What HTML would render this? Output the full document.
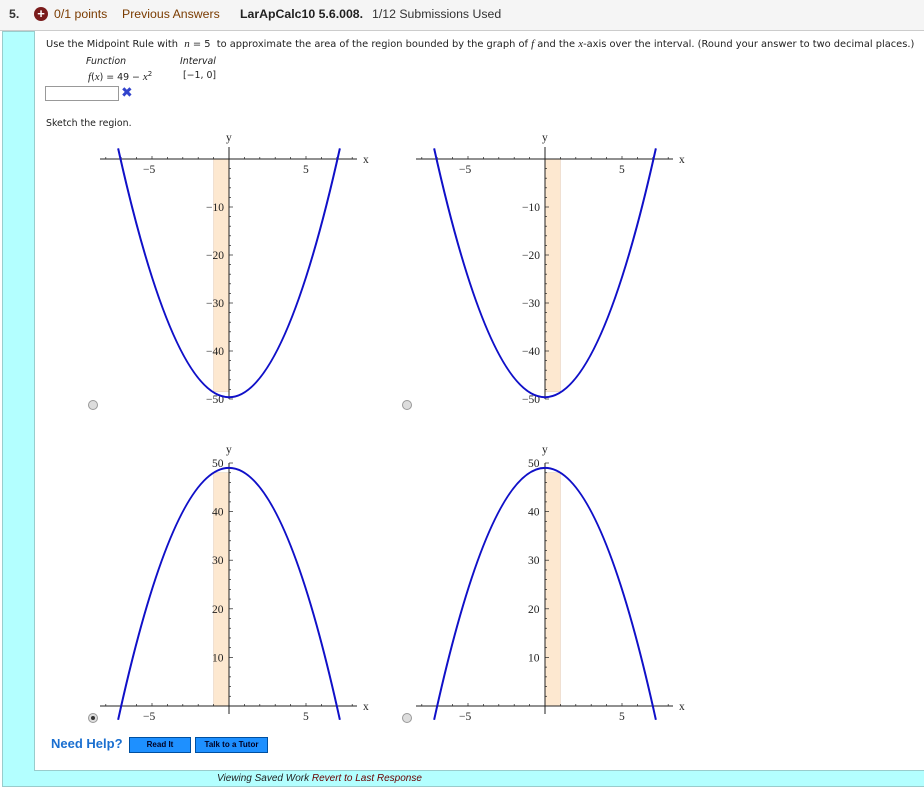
<!DOCTYPE html>
<html><head><meta charset="utf-8"><style>
body{margin:0;width:924px;height:793px;background:#fff;font-family:"DejaVu Sans",sans-serif;position:relative;overflow:hidden}
.hdr{position:absolute;left:0;top:0;width:924px;height:30px;background:#f5f5f5;border-bottom:1px solid #ccc}
.hdr span{position:absolute;top:7px;font-size:12.3px;color:#333;font-family:"Liberation Sans",sans-serif}
.panel{position:absolute;left:2px;top:31px;width:922px;height:756px;background:#b3ffff;border:1px solid #9cc;border-right:none;box-sizing:border-box}
.inner{position:absolute;left:34px;top:31px;width:890px;height:740px;background:#fff;border-left:1px solid #9cc;border-bottom:1px solid #9cc;box-sizing:border-box}
.t{position:absolute;font-size:9.4px;color:#222;white-space:nowrap}
i{font-family:"Liberation Serif",serif;font-size:11px}
svg{position:absolute;left:0;top:0}
.btn{position:absolute;top:737px;height:14px;background:#1e90ff;border:1px solid #0050a0;font:bold 8px "Liberation Sans",sans-serif;color:#002;text-align:center;line-height:14px}
</style></head><body>
<div class="hdr">
<span style="left:9px;font-weight:bold">5.</span>
<span style="left:34px;top:7px;width:14px;height:14px;border-radius:50%;background:#7a1c1c;color:#fff;font-weight:bold;text-align:center;line-height:14px;font-size:13px">+</span>
<span style="left:54px;color:#7a3b00">0/1 points</span>
<span style="left:122px;color:#7a3b00">Previous Answers</span>
<span style="left:240px;font-weight:bold;color:#222">LarApCalc10 5.6.008.</span>
<span style="left:372px;color:#333">1/12 Submissions Used</span>
</div>
<div class="panel"></div>
<div class="inner"></div>
<div class="t" style="left:46px;top:38px;font-size:9.85px">Use the Midpoint Rule with &nbsp;<i>n</i> = 5 &nbsp;to approximate the area of the region bounded by the graph of <i>f</i> and the <i>x</i>-axis over the interval. (Round your answer to two decimal places.)</div>
<div class="t" style="left:86px;top:56px;font-style:italic">Function</div>
<div class="t" style="left:180px;top:56px;font-style:italic">Interval</div>
<div class="t" style="left:88px;top:70px"><i>f</i>(<i>x</i>) = 49 − <i>x</i><sup style="font-size:7px">2</sup></div>
<div class="t" style="left:183px;top:70px">[−1, 0]</div>
<div style="position:absolute;left:45px;top:86px;width:72px;height:13px;border:1px solid #999"></div>
<div class="t" style="left:121px;top:85px;color:#3344cc;font-size:14px;font-weight:bold">✖</div>
<div class="t" style="left:46px;top:118px">Sketch the region.</div>
<svg width="924" height="793" id="g" font-family="Liberation Serif,serif" font-size="11.5" fill="#222"></svg>
<div class="t" style="left:51px;top:736px;font:bold 13px 'Liberation Sans',sans-serif;color:#1a6fd0">Need Help?</div>
<div class="btn" style="left:129px;width:60px">Read It</div>
<div class="btn" style="left:195px;width:71px">Talk to a Tutor</div>
<div class="t" style="left:217px;top:773px;font:italic 10px 'Liberation Sans',sans-serif;color:#222">Viewing Saved Work <span style="color:#6a0000">Revert to Last Response</span></div>
<script>
var s='';
function graph(ox,ay,up,shL){
 var sx=15.4,sy=up?4.86:4.8;
 var X=function(x){return ox+sx*x};
 if(up){var top=ay-48*sy;s+='<rect x="'+X(shL)+'" y="'+top+'" width="'+sx+'" height="'+(ay-top)+'" fill="#fde8d0" stroke="#e0c8b0" stroke-width="0.5"/>';}
 else{s+='<rect x="'+X(shL)+'" y="'+ay+'" width="'+sx+'" height="'+(48.5*sy)+'" fill="#fde8d0" stroke="#e0c8b0" stroke-width="0.5"/>';}
 s+='<line x1="'+(ox-129)+'" y1="'+ay+'" x2="'+(ox+128)+'" y2="'+ay+'" stroke="#222" stroke-width="1"/>';
 for(var k=-8;k<=8;k++){var px=X(k);if(px<ox-129||px>ox+128||k==0)continue;s+='<line x1="'+px+'" y1="'+(ay-(k%5==0?3:2))+'" x2="'+px+'" y2="'+ay+'" stroke="#222" stroke-width="0.7"/>';}
 s+='<text x="'+(ox+134)+'" y="'+(ay+4)+'">x</text>';
 s+='<text x="'+(X(-5)-9)+'" y="'+(ay+14)+'">−5</text><text x="'+(X(5)-3)+'" y="'+(ay+14)+'">5</text>';
 if(up){s+='<line x1="'+ox+'" y1="'+(ay-50*sy)+'" x2="'+ox+'" y2="'+(ay+8)+'" stroke="#222"/>';
  s+='<text x="'+(ox-3)+'" y="'+(ay-50*sy-10)+'">y</text>';
  for(var v=2;v<=50;v+=2){var py=ay-v*sy;s+='<line x1="'+ox+'" y1="'+py+'" x2="'+(ox+(v%10==0?4:2))+'" y2="'+py+'" stroke="#222" stroke-width="0.7"/>';if(v%10==0)s+='<text x="'+(ox-17)+'" y="'+(py+4)+'">'+v+'</text>';}
 }else{s+='<line x1="'+ox+'" y1="'+(ay-12)+'" x2="'+ox+'" y2="'+(ay+50*sy)+'" stroke="#222"/>';
  s+='<text x="'+(ox-3)+'" y="'+(ay-18)+'">y</text>';
  for(var v=2;v<=50;v+=2){var py=ay+v*sy;s+='<line x1="'+ox+'" y1="'+py+'" x2="'+(ox+(v%10==0?4:2))+'" y2="'+py+'" stroke="#222" stroke-width="0.7"/>';if(v%10==0)s+='<text x="'+(ox-23)+'" y="'+(py+4)+'">−'+v+'</text>';}
 }
 var x0=7.2,y0=x0*x0-49,c=y0-2*x0*x0;
 if(up){s+='<path d="M'+X(-x0)+' '+(ay+y0*sy)+' Q'+ox+' '+(ay+c*sy)+' '+X(x0)+' '+(ay+y0*sy)+'" fill="none" stroke="#1010c8" stroke-width="2"/>';}
 else{s+='<path d="M'+X(-x0)+' '+(ay-y0*sy+3)+' Q'+ox+' '+(ay-c*sy+3)+' '+X(x0)+' '+(ay-y0*sy+3)+'" fill="none" stroke="#1010c8" stroke-width="2"/>';}
}
graph(229,159,false,-1);graph(545,159,false,0);graph(229,706,true,-1);graph(545,706,true,0);
function radio(x,y,sel){s+='<circle cx="'+x+'" cy="'+y+'" r="4.5" fill="#ddd" stroke="#999"/>';if(sel)s+='<circle cx="'+x+'" cy="'+y+'" r="2" fill="#333"/>';}
radio(93,405,0);radio(407,405,0);radio(93,718,1);radio(407,718,0);
document.getElementById('g').innerHTML=s;
</script>
</body></html>
